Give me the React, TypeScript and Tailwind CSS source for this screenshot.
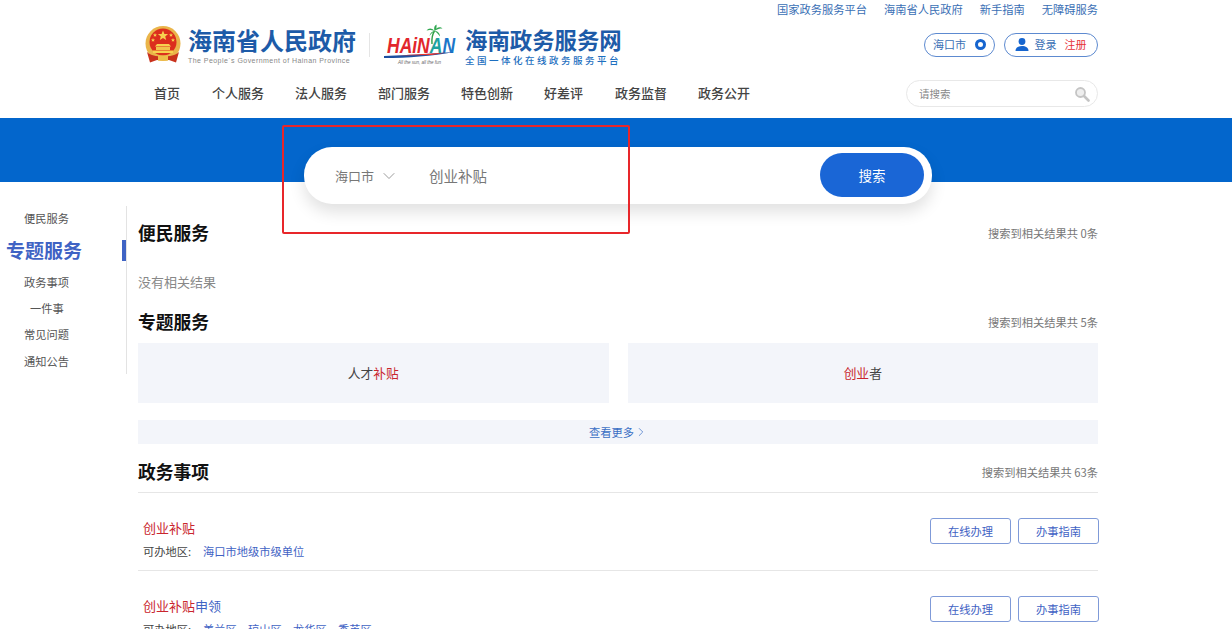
import { ChevronDown, ChevronRight } from 'lucide-react'

const cjk = { fontFamily: '"Noto Sans CJK SC", "Liberation Sans", sans-serif' }

const topLinks = ['国家政务服务平台', '海南省人民政府', '新手指南', '无障碍服务']
const navItems: [string, string][] = [
  ['首页', 'w-[58px]'],
  ['个人服务', 'w-[83px]'],
  ['法人服务', 'w-[83px]'],
  ['部门服务', 'w-[83px]'],
  ['特色创新', 'w-[83px]'],
  ['好差评', 'w-[71px]'],
  ['政务监督', 'w-[83px]'],
  ['政务公开', 'w-[52px]'],
]
const sideItems = ['政务事项', '一件事', '常见问题', '通知公告']

function Emblem() {
  const star = 'M0-2l.6 1.400 1.400.1-1.100.9.4 1.400L0 1l-1.300.8.4-1.400-1.100-.9 1.400-.1z'
  return (
    <svg width="36" height="38" viewBox="0 0 36 38">
      <circle cx="18" cy="17.500" r="17.500" fill="#eab54a" />
      <circle cx="18" cy="16" r="13.500" fill="#dc2f1d" />
      <path d="M18 4.500l1.400 3.400 3.700.2-2.900 2.300 1 3.600-3.200-2-3.200 2 1-3.600-2.900-2.300 3.700-.2z" fill="#f7d24f" />
      <path d={star} fill="#f7d24f" transform="translate(10 9)" />
      <path d={star} fill="#f7d24f" transform="translate(26 9)" />
      <path d={star} fill="#f7d24f" transform="translate(8 14)" />
      <path d={star} fill="#f7d24f" transform="translate(28 14)" />
      <path d="M12 18h12l2 2.500H10z" fill="#f7d24f" />
      <rect x="11" y="21" width="14" height="3" fill="#f1c44c" />
      <rect x="8" y="24.500" width="20" height="2.500" fill="#f7d24f" />
      <path d="M2 26c4 3.500 9 4.500 16 4.500s12-1 16-4.500l-3 10.500-7-2.500H12l-7 2.500z" fill="#c9321d" />
      <rect x="13" y="29.500" width="10" height="5" fill="#eebd48" />
    </svg>
  )
}

function HainanLogo() {
  return (
    <svg width="72" height="42" viewBox="0 0 72 42">
      <path d="M48 20c-.5-6 .5-10 2.500-13" stroke="#2f9e44" strokeWidth="1.400" fill="none" />
      <path d="M50.500 7c-3-3.500-6-3-8-.5 3-1 5-.5 8 .5zM50.500 7c2-4.500 6-4.500 8-2.500-3 0-5 .5-8 2.500zM50.500 7c-1-3.500 0-5.500 2-6.500 .3 2.500 0 4.500-2 6.500zM50.500 7c3 0 5.500 2 5.500 5.500-2-2.500-3.500-4.500-5.500-5.500zM50.500 7c-2.500.5-4.500 2-5 5 1.500-2 3-3.500 5-5z" fill="#32a852" />
      <text
        transform="translate(3 29) scale(1 1.250)"
        fontSize="17.500"
        fontWeight="700"
        fontStyle="italic"
        fontFamily="Liberation Sans"
        fill="#e2262c"
      >
        HAiN<tspan fill="#1fa2a0">A</tspan>
        <tspan fill="#1b76c9">N</tspan>
      </text>
      <path d="M0 32c22-1 46-2 70-4-22 4-46 6-70 6z" fill="#1c4fa0" />
      <path d="M12 31.500c18-1 36-2 50-3l-14 2.500z" fill="#e8352f" />
      <text x="14" y="40" fontSize="4.500" fontStyle="italic" fill="#666" fontFamily="Liberation Sans">
        All the sun, all the fun
      </text>
    </svg>
  )
}

function MetaHeading({ title, count }: { title: string; count: string }) {
  return (
    <div className="flex items-center justify-between">
      <h2 className="text-[17.75px] font-bold leading-[24px] text-[#111]">{title}</h2>
      <span className="mt-[3px] text-[11.25px] text-[#777]">搜索到相关结果共 {count}条</span>
    </div>
  )
}

function ResultRow({ hit, rest, regions }: { hit: string; rest?: string; regions: string }) {
  return (
    <div className="flex h-[78px] shrink-0 items-start justify-between border-b border-[#e6e6e6] pl-[5px] pt-[25px]">
      <div>
        <div className="text-[13px] leading-[20px] text-[#3f63c4]">
          <span className="text-[#c9252d]">{hit}</span>
          {rest}
        </div>
        <div className="mt-[4px] flex text-[11.25px] leading-[18px] text-[#444]">
          <span className="w-[60px]">可办地区:</span>
          <span className="text-[#3f63c4]">{regions}</span>
        </div>
      </div>
      <div className="-mr-[1px] flex gap-[7px]">
        <button className="h-[26px] w-[81px] rounded-[3px] border border-[#7f9ad8] text-[11.25px] text-[#3f63c4]">在线办理</button>
        <button className="h-[26px] w-[81px] rounded-[3px] border border-[#7f9ad8] text-[11.25px] text-[#3f63c4]">办事指南</button>
      </div>
    </div>
  )
}

export default function App() {
  return (
    <div className="relative h-[629px] w-[1232px] overflow-hidden bg-white" style={cjk}>
      <header className="ml-[138px] flex h-[118px] w-[960px] flex-col pl-[5px]">
        <div className="flex h-[19px] items-center justify-end gap-[17px] text-[11.25px] text-[#3a6fb5]">
          {topLinks.map(link => (
            <a key={link}>{link}</a>
          ))}
        </div>
        <div className="flex h-[51px] items-center justify-between">
          <div className="flex items-center">
            <div className="ml-[2px]">
              <Emblem />
            </div>
            <div className="ml-[7px] mt-[3px] w-[170px]">
              <div className="whitespace-nowrap text-[24px] font-bold leading-[26px] text-[#1d5ba8]">海南省人民政府</div>
              <div className="mt-[3px] whitespace-nowrap text-[7px] leading-[9px] tracking-[0.45px] text-[#888]" style={{ fontFamily: '"Liberation Sans", sans-serif' }}>
                The People`s Government of Hainan Province
              </div>
            </div>
            <div className="ml-[11px] mr-[14px] h-[24px] w-px bg-[#e5e5e5]" />
            <HainanLogo />
            <div className="ml-[9px] mt-[3px]">
              <div className="whitespace-nowrap text-[22.4px] font-bold leading-[25px] text-[#1d5ba8]">海南政务服务网</div>
              <div className="mt-[2px] whitespace-nowrap text-[9.5px] font-medium leading-[12px] tracking-[2.5px] text-[#1d6fc0]">全国一体化在线政务服务平台</div>
            </div>
          </div>
          <div className="flex items-center gap-[9px] text-[11px]">
            <div className="flex h-[24px] w-[71px] items-center justify-center gap-[9px] rounded-full border border-[#5d8ad0] text-[#3a6fb5]">
              海口市
              <span className="size-[11px] rounded-full border-[3px] border-[#1665cf]" />
            </div>
            <div className="flex h-[24px] w-[94px] items-center justify-center rounded-full border border-[#5d8ad0] pr-[1px] text-[#3a6fb5]">
              <svg width="14" height="13" viewBox="0 0 14 13" className="mr-[6px]">
                <circle cx="7" cy="3.500" r="3.400" fill="#1665cf" />
                <path d="M0.500 13c0-3.400 2.800-5 6.500-5s6.500 1.600 6.500 5z" fill="#1665cf" />
              </svg>
              登录
              <span className="ml-[8px] text-[#e6303a]">注册</span>
            </div>
          </div>
        </div>
        <div className="flex flex-1 items-start justify-between pt-[10px]">
          <nav className="flex h-[26px] items-center pl-[11px] text-[13px] font-medium text-[#444]">
            {navItems.map(([label, width]) => (
              <a key={label} className={`${width} shrink-0 whitespace-nowrap`}>
                {label}
              </a>
            ))}
          </nav>
          <div className="flex h-[27px] w-[192px] items-center justify-between rounded-full border border-[#e8e8e8] pl-[12px] pr-[7px] text-[10.5px] text-[#888]">
            请搜索
            <svg width="16" height="16" viewBox="0 0 16 16" fill="none" stroke="#c4c4c4">
              <circle cx="6.500" cy="6.500" r="4.500" strokeWidth="1.800" fill="#eee" />
              <path d="M10 10l4.500 4.500" strokeWidth="2.600" strokeLinecap="round" />
            </svg>
          </div>
        </div>
      </header>

      <div className="h-[64px] bg-[#0366cc]" />

      <div className="absolute left-[304px] top-[147px] flex h-[57px] w-[628px] items-center justify-between rounded-[28px] bg-white pl-[31px] pr-[8px] shadow-[0_8px_16px_rgba(0,0,0,0.12)]">
        <div className="flex items-center pt-[1px] text-[#777]">
          <span className="text-[13px]">海口市</span>
          <ChevronDown className="ml-[5px] size-[20px] text-[#888]" strokeWidth={1} />
          <span className="ml-[30px] text-[14.5px]">创业补贴</span>
        </div>
        <button className="mb-[1px] h-[44px] w-[104px] rounded-full bg-[#1a66d6] text-[13.5px] text-white">搜索</button>
      </div>

      {/* red annotation box */}
      <div className="pointer-events-none absolute left-[282px] top-[125px] h-[109px] w-[348px] rounded-[2px] border-2 border-[#e8262a]" />

      <div className="flex">
        <aside className="ml-[5px] mt-[24px] h-[168px] w-[122px] shrink-0 border-r border-[#e3e3e3] text-[11.25px] text-[#555]">
          <div className="pl-[19px] pt-[3px] leading-[18px]">便民服务</div>
          <div className="relative mt-[7px] h-[32px] pl-[1px] text-[19px] font-bold leading-[32px] text-[#3f63c4]">
            专题服务
            <span className="absolute right-0 top-[6px] h-[21px] w-[4px] bg-[#3f63c4]" />
          </div>
          <div className="mt-[7px] flex flex-col gap-[8.2px]">
            {sideItems.map(item => (
              <div key={item} className={`leading-[18px] ${item === '一件事' ? 'pl-[25px]' : 'pl-[19px]'}`}>
                {item}
              </div>
            ))}
          </div>
        </aside>

        <main className="ml-[11px] flex w-[960px] shrink-0 flex-col pt-[38px]">
          <MetaHeading title="便民服务" count="0" />
          <p className="mt-[28px] text-[13px] leading-[20px] text-[#888]">没有相关结果</p>
          <div className="mt-[17px]">
            <MetaHeading title="专题服务" count="5" />
          </div>
          <div className="mt-[10px] grid grid-cols-2 gap-[19px]">
            <div className="flex h-[60px] items-center justify-center bg-[#f3f5fa] text-[12.75px] text-[#444]">
              人才<span className="text-[#c9252d]">补贴</span>
            </div>
            <div className="flex h-[60px] items-center justify-center bg-[#f3f5fa] text-[12.75px] text-[#444]">
              <span className="text-[#c9252d]">创业</span>者
            </div>
          </div>
          <div className="mt-[17px] flex h-[24px] items-center justify-center bg-[#f3f5fa] pl-[1px] text-[11.25px] text-[#3a6fc4]">
            查看更多
            <ChevronRight className="size-[14px]" strokeWidth={1.2} />
          </div>
          <div className="mt-[15px] border-b border-[#e6e6e6] pb-[9px]">
            <MetaHeading title="政务事项" count="63" />
          </div>
          <ResultRow hit="创业补贴" regions="海口市地级市级单位" />
          <ResultRow hit="创业补贴" rest="申领" regions="美兰区、琼山区、龙华区、秀英区" />
        </main>
      </div>
    </div>
  )
}
